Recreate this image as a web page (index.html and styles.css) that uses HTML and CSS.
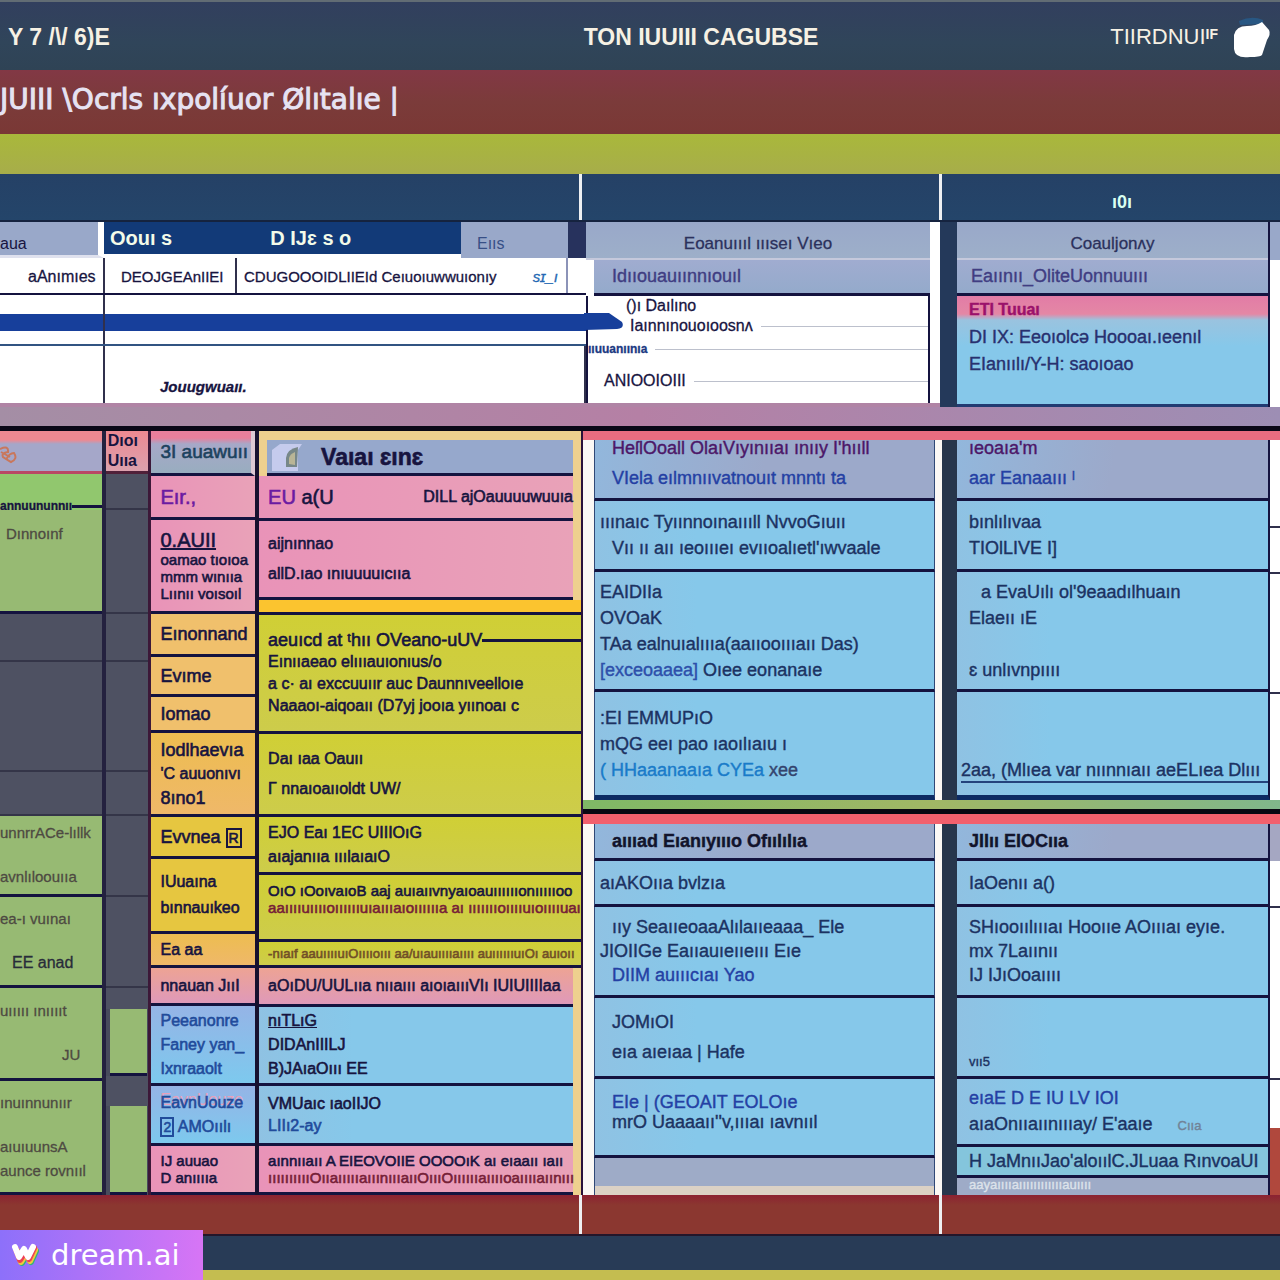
FILE: index.html
```html
<!DOCTYPE html>
<html lang="en">
<head>
<meta charset="utf-8">
<title>TON IUUIII CAGUBSE</title>
<meta name="viewport" content="width=device-width, initial-scale=1">
<link rel="stylesheet" href="styles.css">
</head>
<body>
<header class="topbar">
  <span class="brand">Y 7 /\/ 6)E</span>
  <h1>TON IUUIII CAGUBSE</h1>
  <span class="account">TIIRDNUI<sup>IF</sup>
    <svg class="logo" viewBox="0 0 42 44" aria-hidden="true"><path d="M7 6Q20 0 31 5L31 9L8 10Z" fill="#285783"/><path d="M2 20Q4 11 15 11Q24 11 30 7L37 15Q39 19 35 25L30 40Q28 42 18 42Q3 44 2 34Z" fill="#fff"/></svg>
  </span>
</header>
<div class="crumb">JUIII \Ocrls ıxpolíuor Ølıtalıe |</div>
<div class="ribbon"></div>

<section class="band">
  <div></div><div></div><div>ı0ı</div>
</section>

<section class="upper">
  <div class="sheet">
    <div class="sheet-head">
      <span class="lilac first">aua</span>
      <span class="tabs"><b>Oouı s</b><b>D IJɛ s o</b></span>
      <span class="lilac last">Eııs</span>
    </div>
    <div class="sheet-row">
      <span>aAnımıes</span><span>DEOJGEAnIIEI</span><span>CDUGOOOIDLIIEId Ceıuoıuwwuıonıy <i>sɪ_ı</i></span>
    </div>
    <div class="sheet-row plain"><span></span><span></span></div>
    <div class="sheet-row bar"><span></span><span></span></div>
    <div class="sheet-row plain low"><span></span><span></span></div>
    <div class="sheet-row note"><span></span><span>Jouugwuaıı.</span></div>
  </div>
  <div class="details">
    <svg class="arrow" viewBox="0 0 40 24" aria-hidden="true"><path d="M0 3H25L38 12Q41 18 33 19L0 20Z" fill="#173f9b"/></svg>
    <h2>Eoanuıııl ıııseı Vıeo</h2>
    <h3>Idııouauıınnıouıl</h3>
    <div class="lines">
      <p class="in2">()ı Daılıno</p>
      <p class="in3">Iaınnınouoıoosnʌ</p>
      <p class="out">ııuuanıınıa</p>
      <p class="in1">ANIOOIOIII</p>
    </div>
  </div>
  <div class="catalog">
    <h2>Coauljonʌy</h2>
    <h3>Eaıınıı_OliteUonnuuııı</h3>
    <div class="catalog-body">
      <p class="flag">ETI Tuuaı</p>
      <p>DI IX: Eeoıolcə Hoooaı.ıeenıl</p>
      <p>EIanıılı/Y-H: saoıoao</p>
    </div>
  </div>
  <div class="edge"></div>
</section>
<div class="mauve"></div>

<main class="board">
  <section class="plan">
    <div class="col col-a">
      <div class="head"><svg class="swirl" viewBox="0 0 18 20" aria-hidden="true"><path d="M0 4Q9 0 8 7Q1 8 3 12L11 17Q18 14 14 8Q9 8 6 15M1 7L10 12" fill="none" stroke="#c9775c" stroke-width="2"/></svg></div>
      <div class="green struck"><p class="cut">annuununnıı</p></div>
      <div class="green begin"><p class="in0">Dınnoınf</p></div>
      <div class="slate"></div><div class="slate"></div><div class="slate"></div>
      <div class="green spread"><p>unnrrACe-lıllk</p><p>avnlıloouııa</p></div>
      <div class="green spread"><p>ea-ı vuınaı</p><p class="in1 ink">EE anad</p></div>
      <div class="green spread"><p>uııııı ınııııt</p><p class="in4">JU</p></div>
      <div class="green g8"><p>ınuınnunıır</p><p class="drop">aıuıuunsA</p><p>aunce rovnııl</p></div>
    </div>
    <div class="col col-b">
      <div class="head"><p>Dıoı</p><p>Uııa</p></div>
      <div class="slate"></div><div class="slate"></div><div class="slate"></div><div class="slate"></div>
      <div class="slate"></div><div class="slate"></div><div class="slate"></div><div class="slate nub"></div>
      <div class="green inset"></div><div class="slate nub"></div><div class="green inset"></div>
    </div>
    <div class="col col-c">
      <div class="head"><p>3I auawuıı</p></div>
      <div class="pink"><p class="violet big">Eır.,</p></div>
      <div class="pink g2"><p class="big under">0.AUII</p><p class="tiny">oamao tıoıoa</p><p class="tiny">mmm wınııa</p><p class="tiny">Lıınıı voısoıl</p></div>
      <div class="orange"><p class="mid">Eınonnand</p></div>
      <div class="orange"><p class="mid">Evıme</p></div>
      <div class="orange"><p class="mid">Iomao</p></div>
      <div class="amber g8"><p class="mid">Iodlhaevıa</p><p>'C auuonıvı</p><p class="mid">8ıno1</p></div>
      <div class="gold"><p class="mid">Evvnea <span class="boxed">R</span></p></div>
      <div class="gold g10"><p>IUuaına</p><p>bınnauıkeo</p></div>
      <div class="amber"><p>Ea aa</p></div>
      <div class="rose"><p>nnauan JııI</p></div>
      <div class="sky g8"><p class="blue">Peeanonre</p><p class="blue">Faney yan_</p><p class="blue">Ixnraaolt</p></div>
      <div class="sky g8"><p class="blue hot">EavnUouze</p><p class="blue"><span class="boxed">2</span> AMOıılı</p></div>
      <div class="pink g2"><p class="tiny">IJ auuao</p><p class="tiny">D anııııa</p></div>
    </div>
    <div class="col col-d">
      <div class="head"><svg class="seal" viewBox="0 0 32 30" aria-hidden="true"><path d="M1 29V8L9 2H31L27 8V29Z" fill="#c5cbed"/><path d="M15 25V16Q16 7 27 5L26 25Z" fill="#778788"/><path d="M18 22V16Q19 12 24 10V23Z" fill="#b9b596"/></svg><p>Vaıaı ɛınɛ</p></div>
      <div class="pink pair"><p class="big"><span class="violet">EU</span> a(U</p><p>DILL ajOauuuuwuuıa</p></div>
      <div class="pink g14"><p>aijnınnao</p><p>allD.ıao ınıuuuuıcııa</p></div>
      <div class="yolk"></div>
      <div class="lime g6"><p class="mid cut">aeuıcd at ᵗhıı OVeano-uUV</p><p>Eınııaeao elıııauıonıus/o</p><p>a c· aı exccuuıır auc Daunnıveelloıe</p><p>Naaaoı-aiqoaıı (D7yj jooıa yıınoaı c</p></div>
      <div class="lime g14"><p>Daı ıaa Oauıı</p><p>Γ nnaıoaııoldt UW/</p></div>
      <div class="lime g8"><p>EJO Eaı 1EC UIIIOıG</p><p>aıajanııa ııılaıaıO</p></div>
      <div class="lime g2 begin tightfit"><p class="tiny">OıO ıOoıvaıoB aaj auıaııvnyaıoauııııııonıııııoo</p><p class="tiny red">aaııııuııııoııııııuıaıııaıoııııııa aı ıııııııoııııuıoııııuaı</p></div>
      <div class="lime"><p class="small brown">-nıaıf aauııııuıOııııoııı aa/uıauııııaıııı auııııııuıOı auıoıı</p></div>
      <div class="rose"><p>aOıDU/UULııa nııaııı aıoıaıııVIı IUIUIIIIaa</p></div>
      <div class="sky g8"><p class="line">nıTLıG</p><p class="thin">DIDAnIIILJ</p><p class="thin">B)JAıaOııı EE</p></div>
      <div class="sky g6"><p class="thin">VMUaıc ıaoIIJO</p><p class="thin blue">LIIı2-ay</p></div>
      <div class="pink g2"><p class="tiny">aınnııaıı A EIEOVOIIE OOOOıK aı eıaaıı ıaıı</p><p class="tiny red">ııııııııııOııaıııııaııınıııaııOıııOııııııaııııoaııııaıınııı</p></div>
    </div>
  </section>

  <section class="tracks">
    <div class="panel one">
      <div class="stack mid-stack">
        <div class="strip"></div>
        <div class="dusk g14 begin"><p class="plum in1">HeſlOoall OlaıVıyınııaı ınııy I'hııll</p><p class="royal in1">VIela eılmnııvatnouıt mnntı ta</p></div>
        <div class="sky g10"><p>ııınaıc Tyıınnoınaıııll NvvoGıuıı</p><p class="in1">Vıı ıı aıı ıeoıııeı evııoalıetl'ıwvaale</p></div>
        <div class="sky g10"><p>EAIDIIa</p><p>OVOaK</p><p>TAa ealnuıalıııa(aaııooıııaıı Das)</p><p><span class="mark">[exceoaaea]</span> Oıee eonanaıe</p></div>
        <div class="sky g10"><p>:EI EMMUPıO</p><p>mQG eeı pao ıaoılıaıu ı</p><p class="azure">( HHaaanaaıa CYEa <b>xee</b></p></div>
      </div>
      <div class="stack right-stack">
        <div class="strip"></div>
        <div class="dusk g14 begin"><p class="plum">ıeoaıa'm</p><p class="royal">aar Eanaaııı ˡ</p></div>
        <div class="sky g10"><p>bınlılıvaa</p><p>TIOlLIVE I]</p></div>
        <div class="sky g10"><p class="in1">a EvaUılı ol'9eaadılhuaın</p><p>Elaeıı ıE</p><p></p><p>ɛ unlıvnpıııı</p></div>
        <div class="sky end"><p class="rule">2aa, (Mlıea var nıınnıaıı aeELıea Dlııı</p></div>
      </div>
      <div class="edge ticks"></div>
    </div>
    <div class="divider"></div>
    <div class="panel two">
      <div class="stack mid-stack">
        <div class="dusk"><p class="black in1">aıııad Eıanıyıııo Ofıılılıa</p></div>
        <div class="sky"><p>aıAKOııa bvlzıa</p></div>
        <div class="sky g8"><p class="in1">ııy SeaııeoaaAlılaııeaaa_ Ele</p><p>JIOIIGe Eaııauıeııeııı Eıe</p><p class="in1 royal">DIIM auıııcıaı Yao</p></div>
        <div class="sky g14"><p class="in1">JOMıOI</p><p class="in1">eıa aıeıaa | Hafe</p></div>
        <div class="sky g4 rise"><p class="in1 royal">EIe | (GEOAIT EOLOıe</p><p class="in1 thin">mrO Uaaaaıı''v,ıııaı ıavnııl</p></div>
        <div class="foot"></div>
        <div class="cream"></div>
      </div>
      <div class="stack right-stack">
        <div class="dusk"><p class="black">JIIıı EIOCııa</p></div>
        <div class="sky"><p>IaOenıı a()</p></div>
        <div class="sky g8"><p>SHıooıılıııaı Hooııe AOıııaı eyıe.</p><p>mx 7Laıınıı</p><p>IJ IJıOoaıııı</p></div>
        <div class="sky end"><p class="small">vıı5</p></div>
        <div class="sky g10"><p class="royal">eıaE D E IU LV IOI</p><p>aıaOnııaıınıııay/ E'aaıe <small>Cııa</small></p></div>
        <div class="aqua"><p>H JaMnııJao'aloıılC.JLuaa RınvoaUI</p></div>
        <div class="foot"><p class="small ghost">aayaııııaııııııııııııauıııı</p></div>
      </div>
      <div class="edge ticks tab"></div>
    </div>
  </section>
</main>

<div class="base red"><div></div><div></div><div></div></div>
<div class="base navy"></div>
<footer class="base yellow"></footer>
<a class="badge" href="#">
  <svg viewBox="0 0 28 24" aria-hidden="true"><g fill="none" stroke-width="6" stroke-linejoin="round" stroke-linecap="round"><path d="M7 9L11 20L16 12L20 19L25 8" stroke="#30b678"/><path d="M6 8L10 19L15 11L19 18L24 7" stroke="#f3c83d"/><path d="M5 6L9 17L14 9L18 16L23 5" stroke="#ed4154"/><path d="M4 4L8 14L13 6L17 14L22 4" stroke="#fff"/></g></svg>
  dream.ai
</a>
</body>
</html>
```
FILE: styles.css
```css
* { box-sizing: border-box; }
:root {
  --ink: #17143f;
  --rule: #14133f;
  --sky: #86c8ea;
  --lilac: #99a8c9;
  --green: #97ba73;
  --coral: #e96d80;
}
body {
  margin: 0;
  position: relative;
  font: 16px/16px "Liberation Sans", "DejaVu Sans", sans-serif;
  color: var(--ink);
  background: #2a3c56;
}
p, h1, h2, h3 { margin: 0; font-size: inherit; font-weight: inherit; white-space: nowrap; }

/* page header */
.topbar {
  display: grid;
  grid-template-columns: 1fr auto 1fr;
  align-items: center;
  height: 70px;
  padding: 2px 6px 0 8px;
  border-top: 2px solid #626c74;
  background: linear-gradient(#323f5e, #30455a 60%, #2f4355);
  color: #f6f1e4;
  font-size: 23px;
  font-weight: bold;
}
.topbar h1 { font-size: 23px; line-height: 28px; padding-left: 120px; }
.account { display: flex; justify-content: flex-end; align-items: center; font-weight: normal; font-size: 22px; }
.account sup { font-size: 14px; line-height: 16px; padding-bottom: 6px; font-weight: bold; }
.logo { width: 42px; height: 44px; margin-left: 14px; }
.crumb {
  height: 64px;
  padding-top: 16px;
  line-height: 28px;
  font-family: "DejaVu Sans", sans-serif;
  font-size: 28px;
  color: #e6e2f2;
  -webkit-text-stroke: 1px currentColor;
  background: linear-gradient(#823845, #7b3b3a 50%, #7a3835);
  white-space: pre;
}
.ribbon { height: 40px; background: linear-gradient(#a9b83b, #a7ad4a); }

/* navy band above the upper sheets */
.band, .base.red { display: grid; grid-template-columns: 582fr 360fr 338fr; }
.band { height: 48px; background: linear-gradient(#254166, #24456a); border-bottom: 2px solid #15233f; }
.band div { padding: 20px 0 0 22px; text-align: center; color: #d9fff0; font-weight: bold; font-size: 18px; }
.band div:not(:last-child), .base.red div:not(:last-child) { border-right: 3px solid #eef0f2; }

.upper { display: grid; grid-template-columns: 586fr 354fr 330fr 10fr; align-items: start; background: #b084a5; }
.sheet { background: #fff; }
.sheet-head { display: grid; grid-template-columns: 104fr 357fr 107fr 18fr; height: 36px; background: #27325d; }
.lilac { background: var(--lilac); font-size: 16px; padding-top: 14px; }
.lilac.first { border-right: 6px solid #fff; border-bottom: 3px solid #dfe1ee; }
.lilac.last { padding-left: 16px; color: #374f86; }
.tabs { display: flex; gap: 98px; padding: 8px 6px; background: #123a78; color: #f3fbe9; font-size: 20px; border-bottom: 4px solid #fff; }
.sheet-row { display: grid; grid-template-columns: 105fr 132fr 331fr 18fr; height: 37px; border-bottom: 2px solid var(--rule); overflow: hidden; white-space: nowrap; -webkit-text-stroke: 0.3px currentColor; }
.sheet-row span { border-right: 2px solid #30304c; padding-top: 11px; }
.sheet-row span:first-child { padding-left: 28px; }
.sheet-row span:nth-child(2) { padding-left: 16px; font-size: 15px; }
.sheet-row span:nth-child(3) { padding-left: 7px; border-color: #8c93b8; display: flex; justify-content: space-between; padding-right: 8px; font-size: 15px; }
.sheet-row i { color: #2468b3; }
.sheet-row.plain, .sheet-row.bar, .sheet-row.note { grid-template-columns: 105fr 481fr; border: 0; }
.sheet-row.plain { height: 19px; }
.sheet-row.bar { height: 17px; background: #173f9b; }
.sheet-row.low { height: 15px; border-bottom: 2px solid #315482; }
.sheet-row.note { height: 57px; }
.sheet-row.note span:nth-child(2) { padding: 33px 0 0 55px; font-style: italic; font-weight: bold; }
.sheet-row.plain span:last-child, .sheet-row.bar span:last-child { border: 0; }

.details { position: relative; background: #fff; border-right: 10px solid #fff; }
.arrow { position: absolute; left: -2px; top: 88px; width: 40px; height: 24px; z-index: 1; }
.details h2, .catalog h2 { height: 38px; padding-top: 14px; text-align: center; background: linear-gradient(#99a8c9, #9dafc9); border-bottom: 2px solid #c5c9dc; font-size: 17px; color: #2b315c; -webkit-text-stroke: 0.3px currentColor; }
.details h3, .catalog h3 { height: 36px; padding-top: 8px; background: linear-gradient(#a0acd0, #94aacb); border-bottom: 3px solid var(--rule); color: #403d82; font-size: 18px; -webkit-text-stroke: 0.4px currentColor; }
.details h3 { margin-left: 8px; padding-left: 18px; }
.lines { height: 107px; border-right: 2px solid var(--rule); border-left: 2px solid var(--rule); -webkit-text-stroke: 0.3px currentColor; }
.lines p { display: flex; align-items: center; gap: 8px; height: 20px; }
.lines p:not(:first-child)::after { content: ""; flex: 1; height: 1px; background: #bcc0cc; }
.lines .in2 { padding-left: 38px; }
.lines .in3 { padding-left: 42px; }
.lines .out { margin-top: 2px; font-size: 12px; font-weight: bold; color: #1b3a82; height: 22px; }
.lines .in1 { padding-left: 16px; height: 42px; }
.catalog { border-left: 17px solid #24395a; border-right: 2px solid var(--rule); }
.catalog h3 { padding-left: 14px; }
.catalog-body { height: 111px; padding: 6px 12px; background: linear-gradient(#e27ca6 0, #e487a5 18px, #9ac3df 24px, var(--sky) 50px); border-bottom: 3px solid #223b72; display: flex; flex-direction: column; gap: 11px; font-size: 18px; color: #28306f; -webkit-text-stroke: 0.4px currentColor; }
.flag { color: #9b116b; font-weight: bold; font-size: 16px; }
.edge { background: #fff; }
.upper .edge { align-self: stretch; border-top: 38px solid var(--lilac); }
.mauve { height: 24px; background: linear-gradient(90deg, #a48ea5, #b580a5 50%, #9d8eb4); border-bottom: 5px solid #0a0817; }

/* board */
.board { display: grid; grid-template-columns: 583fr 697fr; }
.plan { display: grid; grid-template-columns: 106fr 46fr 108fr 323fr; background: #f0a08d; border-right: 2px solid #2a123b; }
.col, .stack { display: grid; min-width: 0; }
.col > div, .stack > div {
  display: flex;
  flex-direction: column;
  justify-content: center;
  min-width: 0;
  border-bottom: 3px solid var(--rule);
}
.col-a { grid-template-rows: 43px 36px 104px 48px 110px 44px 81px 91px 93px 114px; border-right: 4px solid #24213f; }
.col-b { grid-template-rows: 43px 36px 104px 48px 110px 44px 81px 91px 21px 67px 30px 89px; border-right: 3px solid #3c1838; background: #484b5c; }
.col-c { grid-template-rows: 45px 44px 94px 43px 40px 36px 84px 42px 75px 34px 38px 80px 60px 49px; border-right: 4px solid #17112f; }
.col-d { grid-template-rows: 45px 45px 79px 15px 119px 83px 58px 67px 26px 39px 79px 60px 49px; background: #eed08e; }
.col-c > div { padding-left: 9px; }
.col-d > div { padding-left: 9px; }
.col-a > .head { background: linear-gradient(#ee8991 9px, #a5a7c9 13px); border-color: #b94765; }
.col-b > .head { background: linear-gradient(#ee8991, #dba1ae); border-color: #502039; gap: 4px; padding-left: 2px; font-weight: bold; }
.col-c > .head { background: linear-gradient(#e87f9c 7px, #a7a8c8 13px, #98adbf); border-right: 4px solid #ddc9d4; font-size: 19px; color: #1c425e; }
.col-d > .head { flex-direction: row; justify-content: flex-start; align-items: center; gap: 18px; margin: 9px 8px 0 8px; padding-left: 4px; background: #96a8cc; font-size: 23px; font-weight: bold; line-height: 28px; }
.swirl { width: 18px; height: 20px; margin-top: 8px; }
.seal { width: 32px; height: 30px; }
.green { background: var(--green); color: #4e4a42; font-size: 15px; -webkit-text-stroke: 0.3px currentColor; }
.green .ink { color: #282c3a; font-size: 16px; }
.col > .slate { background: #4e5162; border-bottom: 2px solid #343548; }
.col > .slate.nub { border: 0; }
.inset { margin: 0 1px 0 4px; }
.col > .struck { justify-content: flex-end; background: #91c76e; border: 0; }
.struck p { font-size: 12px; line-height: 8px; font-weight: bold; color: var(--ink); }
.spread { gap: 28px; }
.drop { margin-top: 20px; }
.pink { background: linear-gradient(90deg, #e993b8, #e9a2b8); }
.rose { background: linear-gradient(#eda394, #df99b9); }
.orange { background: #f0c06c; }
.amber { background: linear-gradient(#edbd50, #efb869); }
.gold { background: #e6c640; }
.yolk { background: #fbc42f; }
.lime { background: linear-gradient(#d0cf35, #cdcc4b); }
.sky { background: linear-gradient(90deg, #8fc2e3, var(--sky) 30%); }
.col-d > .pink, .col-d > .rose, .col-d > .sky { margin-right: 8px; }
.col-c > .sky { background: linear-gradient(#95b4e6, #7dc9ee); }
.col-c p, .col-d p { -webkit-text-stroke: 0.6px currentColor; }
.pair.pair { flex-direction: row; justify-content: space-between; align-items: center; }

/* course tracks to the right */
.tracks { min-width: 0; background: #fbf8f5; }
.panel { display: grid; grid-template-columns: 359fr 328fr 10fr; }
.one .stack { grid-template-rows: 9px 61px 71px 120px 108px; }
.two .mid-stack { grid-template-rows: 37px 46px 91px 81px 79px 28px 9px; }
.two .right-stack { grid-template-rows: 37px 46px 91px 81px 68px 31px 17px; }
.stack > .strip { background: var(--coral); border: 0; }
.mid-stack > div:not(.strip) { margin: 0 7px 0 11px; padding-left: 5px; border-left: 1px solid #304876; border-right: 1px solid #304876; }
.right-stack { background: #27364c; }
.right-stack > div:not(.strip) { margin-left: 15px; padding-left: 12px; border-right: 2px solid var(--rule); }
.stack { font-size: 18px; color: #1c3262; }
.stack p { min-height: 16px; -webkit-text-stroke: 0.4px currentColor; }
.one .stack > div:last-child { border-bottom: 5px solid #0d2b63; }
.dusk { background: linear-gradient(100deg, #92b7dc, #9ca9ca 50%); }
.aqua { background: #84c5dc; }
.stack > .foot { background: #9eabc7; border-bottom: 0; }
.stack > .cream { background: #dbd1c5; border: 0; }
.divider { height: 24px; background: linear-gradient(90deg, #7fb866, #a1b765 50%, #80b78b); border-bottom: 10px solid #f2606d; box-shadow: inset 0 -5px #090812; }
.ticks { background: linear-gradient(var(--coral) 9px, #fff 9px, #fff 95px, #30304c 95px, #30304c 97px, #fff 97px, #fff 141px, #30304c 141px, #30304c 143px, #fff 143px, #fff 261px, #30304c 261px, #30304c 263px, #fff 263px); }
.ticks.tab { background: linear-gradient(#a5a7c2 37px, #fff 37px, #fff 82px, #30304c 82px, #30304c 84px, #fff 84px, #fff 254px, #30304c 254px, #30304c 256px, #fff 256px, #fff 304px, #b0483d 304px); }

/* text roles */
.begin.begin { justify-content: flex-start; }
.col .begin { padding-top: 16px; }
.col .tightfit { padding-top: 8px; }
.end.end { justify-content: flex-end; padding-bottom: 4px; }
.rise { padding-bottom: 10px; }
.g2 { gap: 2px; } .g4 { gap: 4px; } .g6 { gap: 6px; } .g8 { gap: 8px; } .g10 { gap: 10px; } .g14 { gap: 14px; }
.in0 { padding-left: 6px; }
.in1 { padding-left: 12px; }
.in4 { padding-left: 62px; }
.tiny { font-size: 15px; line-height: 15px; }
.small { font-size: 13px; line-height: 12px; }
.mid { font-size: 18px; }
.big { font-size: 20px; line-height: 20px; }
.boxed { border: 2px solid currentColor; font-size: 14px; line-height: 12px; padding: 0 1px; }
.mark { color: #2d4faa; }
.violet { color: #6b1ba2; }
.blue { color: #214b9b; }
.hot { text-shadow: 0 -3px #e9a0bb; }
.red { color: #762037; }
.brown { color: #725027; }
.plum { color: #4c1768; }
.royal { color: #2440a4; }
.azure { color: #197bc9; }
.azure b { color: #34446e; font-weight: normal; }
.black { color: #12142c; font-size: 18px; font-weight: bold; }
.ghost { color: #dce2ea; }
.under, .line { text-decoration: underline; }
.rule { border-bottom: 2px solid #24437c; margin-left: -8px; padding-bottom: 3px; margin-bottom: 8px; }
.cut { display: flex; align-items: center; }
.cut::after { content: ""; flex: 1; height: 3px; background: var(--rule); }
.stack small { margin-left: 20px; font-size: 13px; color: #718398; }

/* closing stripes */
.base.red { height: 41px; background: linear-gradient(#8c2232, #8b3730 10px); border-bottom: 2px solid #24162a; }
.base.navy { height: 34px; background: #283b56; }
.base.yellow { height: 10px; background: #c4bd50; }
.badge {
  position: absolute;
  left: 0;
  bottom: 0;
  display: flex;
  align-items: center;
  gap: 12px;
  width: 203px;
  height: 50px;
  padding-left: 11px;
  background: linear-gradient(90deg, #8d70fa, #d775f5);
  color: #fff;
  font: 29px/28px "DejaVu Sans", sans-serif;
  text-decoration: none;
}
.badge svg { width: 28px; height: 24px; }
```
